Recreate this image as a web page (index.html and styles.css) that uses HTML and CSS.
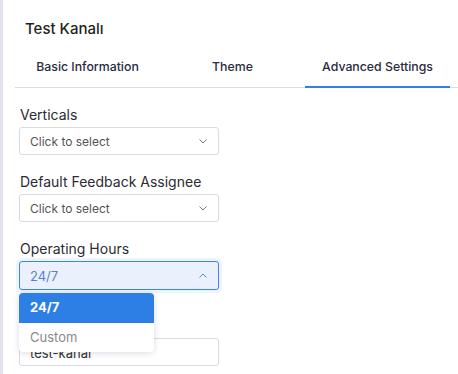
FILE: index.html
```html
<!DOCTYPE html>
<html lang="tr">
<head>
    <meta charset="UTF-8">
    <meta name="viewport" content="width=device-width, initial-scale=1.0">
    <title>Test Kanalı</title>
    <link rel="stylesheet" href="styles.css">
</head>
<body>
    <div class="panel">
        <h2 class="title">Test Kanalı</h2>

        <div class="tabs">
            <div class="tab">Basic Information</div>
            <div class="tab">Theme</div>
            <div class="tab active">Advanced Settings</div>
        </div>

        <div class="form">
            <div class="field">
                <label>Verticals</label>
                <div class="select">
                    <span>Click to select</span>
                    <svg class="chevron" width="8" height="5" viewBox="0 0 8 5"><polyline points="0.5,0.5 4,4 7.5,0.5"/></svg>
                </div>
            </div>

            <div class="field">
                <label>Default Feedback Assignee</label>
                <div class="select">
                    <span>Click to select</span>
                    <svg class="chevron" width="8" height="5" viewBox="0 0 8 5"><polyline points="0.5,0.5 4,4 7.5,0.5"/></svg>
                </div>
            </div>

            <div class="field open">
                <label>Operating Hours</label>
                <div class="select focused">
                    <span>24/7</span>
                    <svg class="chevron" width="8" height="5" viewBox="0 0 8 5"><polyline points="0.5,4.5 4,1 7.5,4.5"/></svg>
                </div>
                <div class="dropdown">
                    <div class="option selected">24/7</div>
                    <div class="option">Custom</div>
                </div>
            </div>

            <!-- label of this field sits under the open dropdown -->
            <div class="field last">
                <div class="input">test-kanal</div>
            </div>
        </div>
    </div>
</body>
</html>
```

FILE: styles.css
```css
body {
    margin: 0;
    font-family: Inter, "Open Sans", sans-serif;
    color: #2b2b33;
    background-color: #fff;
}
.panel {
    border-left: 3px solid #e3e5ee;
    min-height: 100vh;
    box-sizing: border-box;
}
.title {
    margin: 0;
    padding: 18px 0 0 22px;
    font-size: 15px;
    line-height: 22px;
    font-weight: 500;
    color: #1f1f24;
}
.tabs {
    display: flex;
    margin: 16px 0 0 12px;
    border-bottom: 1px solid #dcdde6;
}
.tab {
    width: 145px;
    text-align: center;
    font-size: 12.3px;
    font-weight: 500;
    line-height: 16px;
    padding: 3px 0 11px;
    color: #2a2c40;
    margin-bottom: -1px;
    border-bottom: 2px solid transparent;
}
.tab.active {
    border-bottom-color: #2f80e8;
}
.form {
    padding: 17px 0 0 16px;
}
.field {
    position: relative;
    width: 200px;
    margin-bottom: 17px;
}
.field label {
    display: block;
    font-size: 14px;
    line-height: 20px;
    color: #2b2b33;
    margin: 0 0 2px 1px;
}
.select,
.input {
    display: flex;
    align-items: center;
    justify-content: space-between;
    height: 28px;
    box-sizing: border-box;
    padding: 0 11px 0 10px;
    border: 1px solid #d9dae3;
    border-radius: 3px;
    font-size: 12px;
    color: #555;
    background-color: #fff;
}
.chevron {
    fill: none;
    stroke: #777;
    stroke-width: 1;
}
.select.focused {
    height: 29px;
    background-color: #eaf1fd;
    border-color: #3a86ef;
    box-shadow: 0 0 0 3px #eef4fd;
    color: #5b7fd8;
    font-size: 13px;
}
.select.focused .chevron {
    stroke: #4a86e8;
}
.dropdown {
    position: absolute;
    top: 54px;
    left: 0;
    width: 135px;
    background-color: #fff;
    border-radius: 4px;
    box-shadow: 0 1px 6px rgba(30, 40, 70, 0.16);
    overflow: hidden;
    z-index: 10;
}
.option {
    height: 29.5px;
    line-height: 29.5px;
    padding-left: 11px;
    font-size: 13px;
    color: #8a8a8a;
}
.option.selected {
    background-color: #2d7fe6;
    color: #fff;
    font-weight: 700;
}
.field.last {
    margin-top: 48px;
}
.input {
    color: #333;
    font-size: 13px;
    padding-top: 2px;
}
```
